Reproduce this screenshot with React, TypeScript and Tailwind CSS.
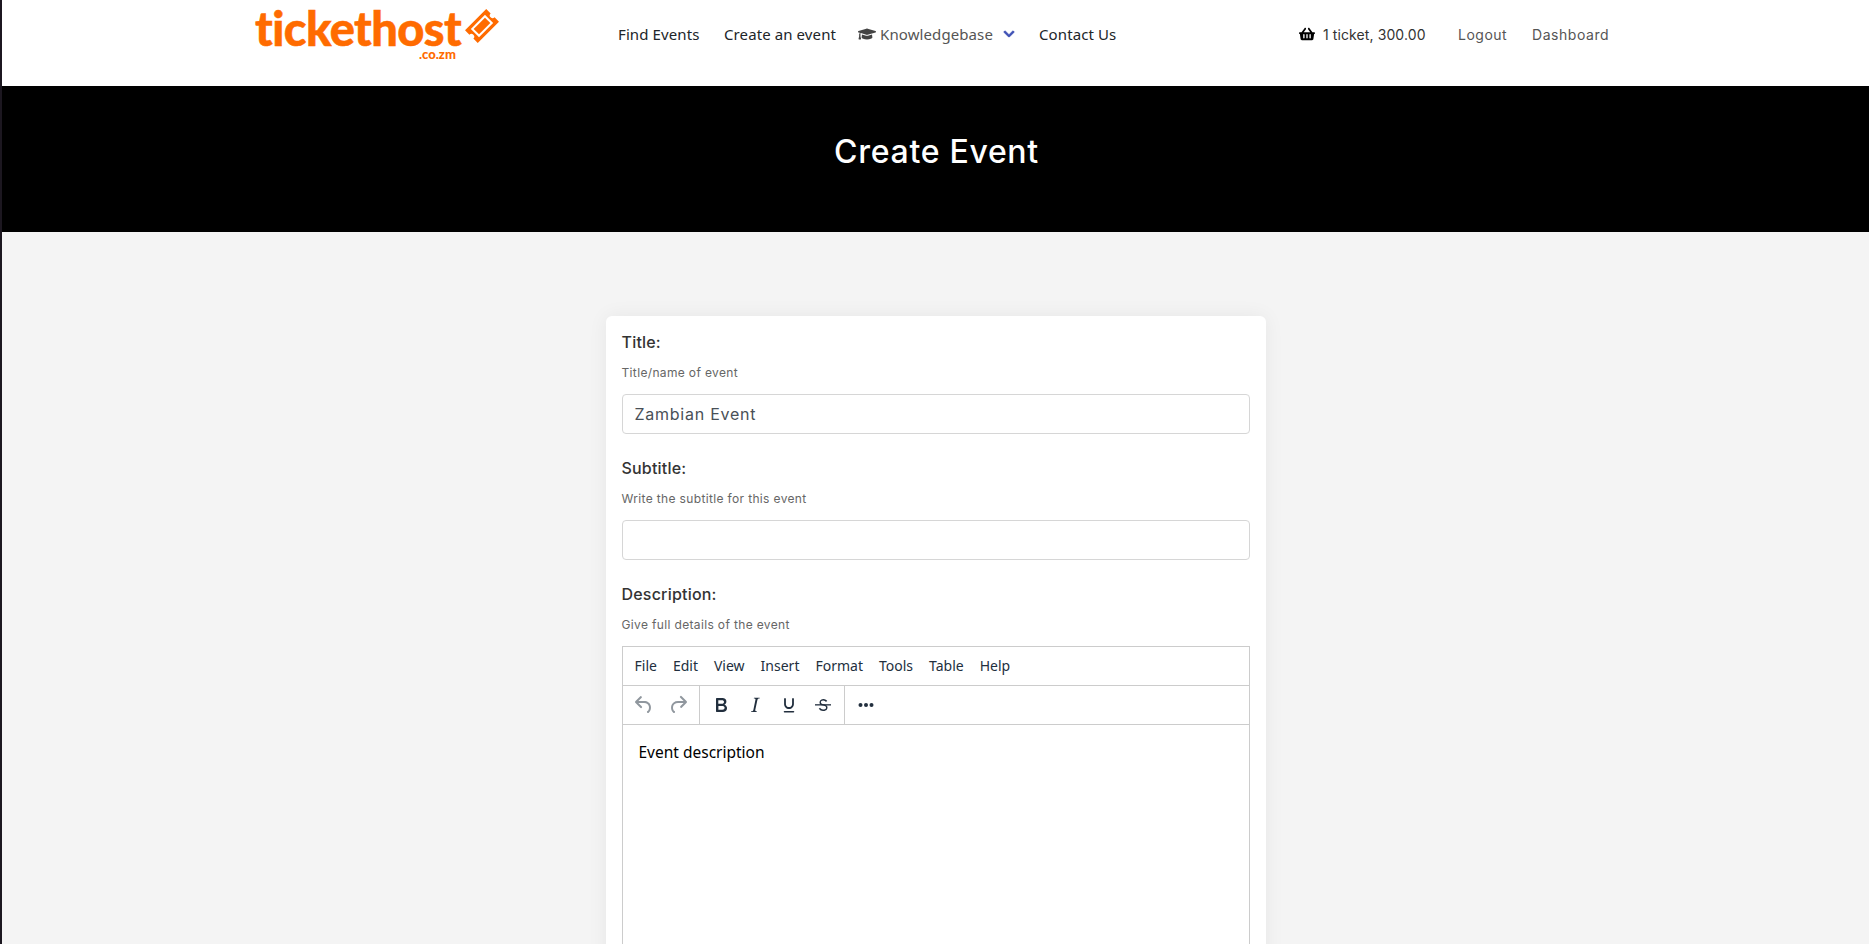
import { FaGraduationCap, FaChevronDown, FaShoppingBasket } from "react-icons/fa";

const mont = "font-['Inter','Liberation_Sans',sans-serif]";
const ubu = "font-['Noto_Sans','Liberation_Sans',sans-serif]";

function Ticket() {
  return (
    <svg width="34" height="34" viewBox="0 0 34 34" className="absolute left-[210px] top-[9px]">
      <g transform="rotate(-45 17 17)">
        <path fill="#ff6b00" d="M2 8h30v6.200a2.800 2.800 0 0 0 0 5.600V26H2v-6.200a2.800 2.800 0 0 0 0-5.600z" />
        <rect x="7" y="11.200" width="20" height="11.600" fill="#fff" />
        <rect x="9" y="13.200" width="16" height="7.600" fill="#ff6b00" />
      </g>
    </svg>
  );
}

function Field({ label, hint, value }: { label: string; hint: string; value?: string }) {
  return (
    <div className="mb-[22px]">
      <div className={`${mont} text-[16px] leading-[24px] font-medium tracking-[0.2px] text-[#333]`}>{label}</div>
      <div className={`${mont} mt-[11px] text-[12px] leading-[16px] tracking-[0.35px] text-[#666]`}>{hint}</div>
      <div className={`${mont} mt-[13px] flex h-[40px] items-center rounded-[4px] border border-[#d6d6d6] bg-white px-[12px] pb-[1px] text-[16px] tracking-[0.75px] text-[#495057]`}>
        {value}
      </div>
    </div>
  );
}

function Btn({ d, muted, children }: { d?: string; muted?: boolean; children?: React.ReactNode }) {
  return (
    <div className="flex h-[34px] w-[34px] items-center justify-center">
      <svg width="24" height="24" viewBox="0 0 24 24" fill={muted ? "#222f3e80" : "#222f3e"}>
        {d ? <path d={d} /> : children}
      </svg>
    </div>
  );
}

const menus = ["File", "Edit", "View", "Insert", "Format", "Tools", "Table", "Help"];

export default function App() {
  return (
    <div className="h-screen overflow-hidden border-l-2 border-[#1c1720] bg-[#f4f4f4]">
      <header className="flex h-[86px] items-center bg-white pb-[18px] pl-[253px]">
        <div className="relative h-[68px] w-[363px]">
          <span className="block pt-[3px] font-['Lato','Liberation_Sans',sans-serif] text-[47px] leading-[50px] font-black tracking-[-0.6px] text-[#ff6b00] [-webkit-text-stroke:0.5px_#ff6b00]">
            tickethost
          </span>
          <Ticket />
          <span className="absolute left-[164px] top-[46px] font-['Lato',sans-serif] text-[13px] leading-[16px] font-black text-[#ff6b00]">
            .co.zm
          </span>
        </div>
        <nav className={`${ubu} flex items-center text-[15px] tracking-[0.1px] text-[#212529]`}>
          <span className="w-[106px]">Find Events</span>
          <span className="w-[134px]">Create an event</span>
          <span className="flex w-[181px] items-center text-[#555]">
            <FaGraduationCap className="mr-[4px] text-[18px] text-[#444]" />
            Knowledgebase
            <FaChevronDown className="ml-[10px] text-[12px] stroke-[30px] text-[#3f51b5]" />
          </span>
          <span className="w-[260px]">Contact Us</span>
        </nav>
        <div className={`${mont} flex items-center text-[14px]`}>
          <FaShoppingBasket className="mr-[8px] text-[16px] text-black" />
          <span className="w-[135px] tracking-[0.1px] text-[#333]">1 ticket, 300.00</span>
          <span className="w-[74px] tracking-[0.5px] text-[#555]">Logout</span>
          <span className="tracking-[0.55px] text-[#555]">Dashboard</span>
        </div>
      </header>

      <div className="flex h-[146px] items-center justify-center bg-black pb-[14px] pl-[2px]">
        <h1 className={`${mont} text-[32px] font-medium tracking-[0.7px] text-white`}>Create Event</h1>
      </div>

      <main className="flex justify-center pt-[84px]">
        <div className="w-[660px] rounded-[6px] bg-white px-[16px] pt-[14px] shadow-[0_0_20px_rgba(0,0,0,0.06)]">
          <Field label="Title:" hint="Title/name of event" value="Zambian Event" />
          <Field label="Subtitle:" hint="Write the subtitle for this event" />
          <div className={`${mont} text-[16px] leading-[24px] font-medium tracking-[0.2px] text-[#333]`}>Description:</div>
          <div className={`${mont} mt-[11px] text-[12px] leading-[16px] tracking-[0.35px] text-[#666]`}>Give full details of the event</div>
          <div className="mt-[13px] h-[600px] border border-[#ccc]">
            <div className={`${ubu} flex h-[39px] items-center border-b border-[#ccc] pb-[2px] pl-[4px] text-[14px] text-[#222f3e]`}>
              {menus.map((m) => (
                <span key={m} className="px-[8px]">{m}</span>
              ))}
            </div>
            <div className="flex h-[39px] items-stretch border-b border-[#ccc]">
              <div className="flex items-center border-r border-[#ccc] px-[4px]">
                <Btn muted d="M6.400 8H12c3.700 0 6.200 2 6.800 5.100.6 2.700-.4 5.600-2.300 6.800a1 1 0 0 1-1-1.800c1.100-.6 1.800-2.700 1.400-4.600-.5-2.100-2.100-3.500-4.900-3.500H6.400l3.300 3.300a1 1 0 1 1-1.400 1.400l-5-5a1 1 0 0 1 0-1.400l5-5a1 1 0 0 1 1.400 1.400L6.400 8z" />
                <Btn muted d="M17.600 10H12c-2.800 0-4.400 1.400-4.900 3.500-.4 2 .3 4 1.400 4.600a1 1 0 1 1-1 1.800c-1.900-1.200-2.900-4.100-2.300-6.800C6 10 8.400 8 12 8h5.600l-3.300-3.300a1 1 0 1 1 1.400-1.400l5 5a1 1 0 0 1 0 1.400l-5 5a1 1 0 0 1-1.400-1.400l3.300-3.300z" />
              </div>
              <div className="flex items-center border-r border-[#ccc] px-[4px]">
                <Btn d="M7.800 19c-.3 0-.5 0-.6-.2l-.2-.5V5.700c0-.2 0-.4.2-.5l.6-.2h5c1.500 0 2.700.3 3.500 1 .7.6 1.100 1.400 1.100 2.500a3 3 0 0 1-.6 1.900c-.4.6-1 1-1.600 1.200.4.1.9.3 1.300.6s.8.7 1 1.200c.4.4.5 1 .5 1.600 0 1.300-.4 2.300-1.300 3-.8.7-2.100 1-3.800 1H7.800zm5-8.300c.6 0 1.200-.1 1.600-.5.4-.3.6-.7.6-1.300 0-1.100-.8-1.700-2.300-1.700H9.300v3.500h3.400zm.5 6c.7 0 1.300-.1 1.700-.4.4-.4.6-.9.6-1.500s-.2-1-.7-1.400c-.4-.3-1-.4-2-.4H9.400v3.800h4z" />
                <Btn d="M16.700 4.700l-.1.9h-.3c-.6 0-1 0-1.400.3-.3.3-.4.6-.5 1.100l-2.100 9.800v.6c0 .5.4.8 1.400.8h.2l-.2.8H8l.2-.8h.2c1.100 0 1.800-.5 2-1.500l2-9.800.1-.5c0-.6-.4-.8-1.400-.8h-.3l.2-.9h5.800z" />
                <Btn d="M8 5c.5 0 .9.4.9.9V11c0 1.900 1.300 3.100 3.100 3.100s3.100-1.200 3.100-3.100V5.900c0-.5.4-.9.9-.9s.9.4.9.9V11c0 2.900-2.100 5-4.900 5S7.100 13.900 7.100 11V5.900C7.100 5.400 7.500 5 8 5zM7.500 18h9c.4 0 .8.3.8.8s-.4.8-.8.8h-9c-.4 0-.8-.3-.8-.8s.4-.8.8-.8z" />
                <Btn>
                  <g transform="translate(1.800 1.800) scale(0.85)">
                    <path d="M15.600 8.500c-.5-.7-1-1.100-1.300-1.300-.6-.4-1.300-.6-2-.6-2.700 0-2.800 1.700-2.800 2.100 0 1.600 1.800 2 3.200 2.300 4.400.9 4.600 2.800 4.600 3.900 0 1.400-.7 4.100-5 4.100A6.200 6.200 0 0 1 7 16.400l1.500-1.100c.4.600 1.600 2 3.700 2 1.600 0 2.500-.4 3-1 .3-.4.4-.9.4-1.400 0-.7-.2-1.600-3.400-2.200-1.400-.3-2.400-.6-3.100-1.100-.8-.6-1.200-1.400-1.200-2.500 0-1 .4-1.900 1-2.700.6-.7 1.700-1.600 3.500-1.600 1.100 0 2 .3 3 .9.6.4 1.200 1 1.600 1.600l-1.400 1z" />
                  </g>
                  <rect x="4" y="11.200" width="16" height="1.300" />
                </Btn>
              </div>
              <div className="flex items-center px-[4px]">
                <Btn>
                  <circle cx="6.500" cy="12" r="2" />
                  <circle cx="12" cy="12" r="2" />
                  <circle cx="17.500" cy="12" r="2" />
                </Btn>
              </div>
            </div>
            <div className={`${ubu} px-[16px] pt-[17px] text-[15.500px] leading-[20px] text-black`}>Event description</div>
          </div>
        </div>
      </main>
    </div>
  );
}
